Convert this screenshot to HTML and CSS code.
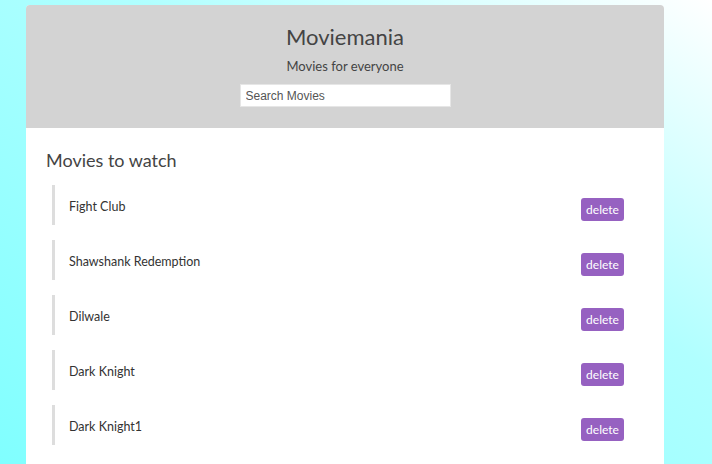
FILE: index.html
```html
<!DOCTYPE html>
<html>
<head>
<meta charset="utf-8">
<link rel="stylesheet" href="styles.css">
</head>
<body>
<div class="card">
  <header class="hero">
    <h1 class="title">Moviemania</h1>
    <p class="tagline">Movies for everyone</p>
    <input class="search" type="text" placeholder="Search Movies">
  </header>
  <section class="content">
    <h2 class="heading">Movies to watch</h2>
    <ul class="list">
      <li class="item"><span class="name">Fight Club</span><button class="delete">delete</button></li>
      <li class="item"><span class="name">Shawshank Redemption</span><button class="delete">delete</button></li>
      <li class="item"><span class="name">Dilwale</span><button class="delete">delete</button></li>
      <li class="item"><span class="name">Dark Knight</span><button class="delete">delete</button></li>
      <li class="item"><span class="name">Dark Knight1</span><button class="delete">delete</button></li>
    </ul>
  </section>
</div>
</body>
</html>
```
FILE: styles.css
```css
html, body {
  margin: 0;
  height: 100%;
}
body {
  background: linear-gradient(to top right, #80ffff 0%, #b0ffff 60%, #ffffff 100%);
  padding: 5px 0 0 26px;
  box-sizing: border-box;
  overflow: hidden;
  font-family: "Comic Sans MS", Lato, sans-serif;
  color: #444;
}
.card {
  width: 638px;
  background: #fff;
  border-radius: 4px 4px 0 0;
  overflow: hidden;
  min-height: 470px;
}
.hero {
  background: #d3d3d3;
  height: 123px;
  box-sizing: border-box;
  padding-top: 17px;
  display: flex;
  flex-direction: column;
  align-items: center;
}
.title {
  margin: 0;
  font-weight: normal;
  font-size: 22px;
  line-height: 30px;
  color: #444;
}
.tagline {
  margin: 6px 0 0;
  font-size: 13px;
  line-height: 16px;
  color: #444;
}
.search {
  margin-top: 10px;
  width: 211px;
  height: 23px;
  box-sizing: border-box;
  border: 1px solid #e6e6e6;
  padding: 0 5px;
  font-family: "Liberation Sans", Arial, sans-serif;
  font-size: 12px;
  outline: none;
}
.search::placeholder {
  color: #555;
}
.content {
  padding: 20px 40px 0 20px;
}
.heading {
  margin: 0 0 13px;
  font-weight: normal;
  font-size: 18px;
  line-height: 24px;
  color: #444;
}
.list {
  list-style: none;
  margin: 0;
  padding: 0 0 0 6px;
  display: flex;
  flex-direction: column;
  gap: 15px;
}
.item {
  height: 40px;
  border-left: 3px solid #ddd;
  box-sizing: border-box;
  display: flex;
  justify-content: space-between;
  align-items: flex-start;
  padding: 13px 0 0 14px;
}
.name {
  font-size: 12.5px;
  line-height: 18px;
  color: #333;
}
.delete {
  width: 43px;
  height: 23px;
  border: none;
  border-radius: 3px;
  background: #9661c1;
  color: #fff;
  font-family: "Comic Sans MS", Lato, sans-serif;
  font-size: 12px;
  padding: 0;
}
```
